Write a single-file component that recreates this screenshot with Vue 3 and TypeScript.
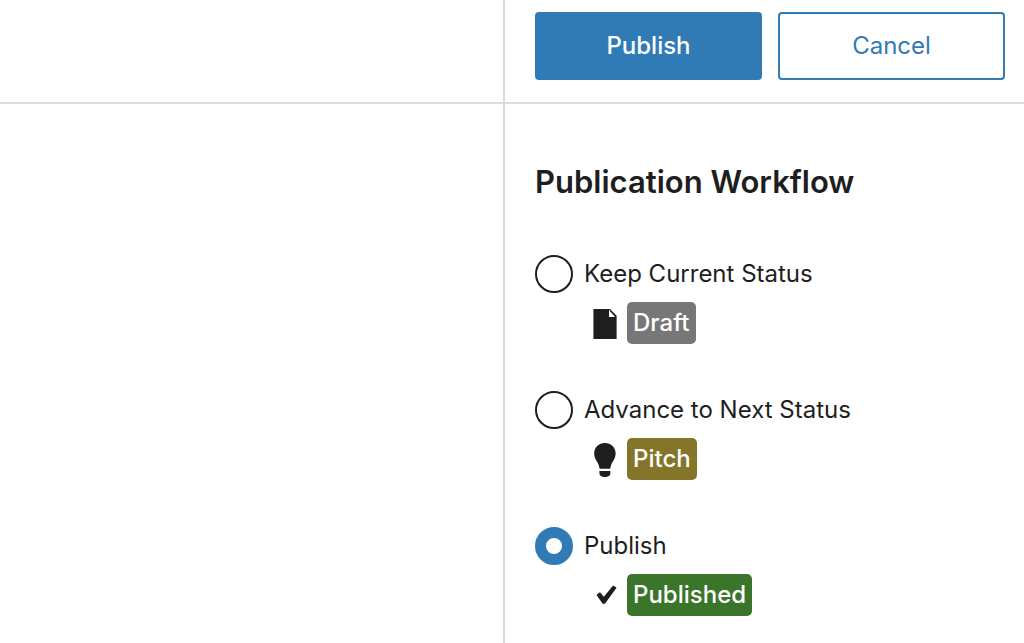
<script setup lang="ts">
import { ref } from 'vue'

interface Choice {
  value: string
  label: string
  status: string
  tone: string
}

const choices: Choice[] = [
  { value: 'current', label: 'Keep Current Status', status: 'Draft', tone: 'draft' },
  { value: 'next', label: 'Advance to Next Status', status: 'Pitch', tone: 'pitch' },
  { value: 'publish', label: 'Publish', status: 'Published', tone: 'published' },
]

const selected = ref('publish')
</script>

<template>
  <div class="editor">
    <main class="canvas">
      <div class="bar"></div>
    </main>
    <aside class="panel">
      <div class="bar actions">
        <button type="button" class="button primary">Publish</button>
        <button type="button" class="button secondary">Cancel</button>
      </div>
      <section class="workflow">
        <h2 id="workflow-title">Publication Workflow</h2>
        <div class="choices" role="radiogroup" aria-labelledby="workflow-title">
          <div v-for="choice in choices" :key="choice.value" class="choice">
            <div class="option">
              <input
                :id="choice.value"
                v-model="selected"
                type="radio"
                name="workflow"
                :value="choice.value"
              />
              <label :for="choice.value">{{ choice.label }}</label>
            </div>
            <div class="status">
              <svg class="icon" viewBox="0 0 40 40" aria-hidden="true">
                <template v-if="choice.tone === 'draft'">
                  <path d="M8.400 6h15.600v8h7.600v22H8.400z" />
                  <path d="M24.800 7l6 6.200h-6z" class="fold" />
                  <path d="M24 6h1l6.600 6.800v1.400h-1.200L24.800 8z" />
                </template>
                <template v-else-if="choice.tone === 'pitch'">
                  <path d="M19.900 4C13.700 4 9.200 8.400 9.200 14.300c0 5.300 2.800 7.500 4.300 11.200l1.200 4.300h10.400l1.200-4.300c1.500-3.700 4.300-5.900 4.300-11.200C30.600 8.400 26.100 4 19.900 4z" />
                  <path d="M14.400 32h11v2.200c0 2.200-2.400 3.900-5.500 3.900s-5.500-1.700-5.500-3.900z" />
                </template>
                <path
                  v-else
                  d="M28.800 10.900l2.300 1.300c.4.300.4.700.1 1.100L20.300 28.300c-.4.600-.9.600-1.500.5-.7 0-1.100-.1-1.500-.6l-5.400-7.600c-.4-.5-.3-.9.200-1.300l2-1.600c.5-.4.9-.3 1.300.1l3.500 4 8.700-10.700c.4-.4.8-.5 1.200-.2z"
                />
              </svg>
              <span class="badge" :class="choice.tone">{{ choice.status }}</span>
            </div>
          </div>
        </div>
      </section>
    </aside>
  </div>
</template>

<style>
body {
  margin: 0;
  background: #fff;
}
</style>

<style scoped>
.editor {
  display: grid;
  grid-template-columns: minmax(0, 1fr) 521px;
  min-height: 100vh;
  color: #1e1e1e;
  font-family: Inter, "Liberation Sans", sans-serif;
  font-size: 24px;
  line-height: 32px;
}

.panel {
  box-sizing: border-box;
  border-left: 2px solid #ddd;
}

.bar {
  box-sizing: border-box;
  height: 104px;
  border-bottom: 2px solid #ddd;
}

.actions {
  display: flex;
  gap: 16px;
  padding: 12px 19px 22px 30px;
}

.button {
  flex: 1;
  border: 2px solid #307bb5;
  border-radius: 4px;
  font: inherit;
  cursor: pointer;
}

.primary {
  background: #307bb5;
  color: #fff;
  font-weight: 500;
}

.secondary {
  background: #fff;
  color: #307bb5;
}

.workflow {
  padding: 58px 19px 24px 30px;
}

h2 {
  margin: 0 0 53px;
  font-size: 31px;
  font-weight: 600;
  line-height: 40px;
}

.choices {
  display: grid;
  gap: 47px;
}

.option {
  display: flex;
  align-items: center;
  gap: 11px;
  height: 38px;
}

input {
  box-sizing: border-box;
  appearance: none;
  width: 38px;
  height: 38px;
  margin: 0;
  border: 2px solid #1e1e1e;
  border-radius: 50%;
  background: #fff;
}

input:checked {
  border: 11px solid #307bb5;
}

.status {
  display: flex;
  align-items: center;
  gap: 2px;
  margin-top: 9px;
  padding-left: 50px;
}

.icon {
  width: 40px;
  height: 40px;
  fill: #1e1e1e;
}

.fold {
  fill: #fff;
}

.badge {
  padding: 5px 6px;
  border-radius: 5px;
  color: #fff;
  font-weight: 500;
}

.draft {
  background: #777;
}

.pitch {
  background: #85752b;
}

.published {
  background: #3b752b;
}
</style>
